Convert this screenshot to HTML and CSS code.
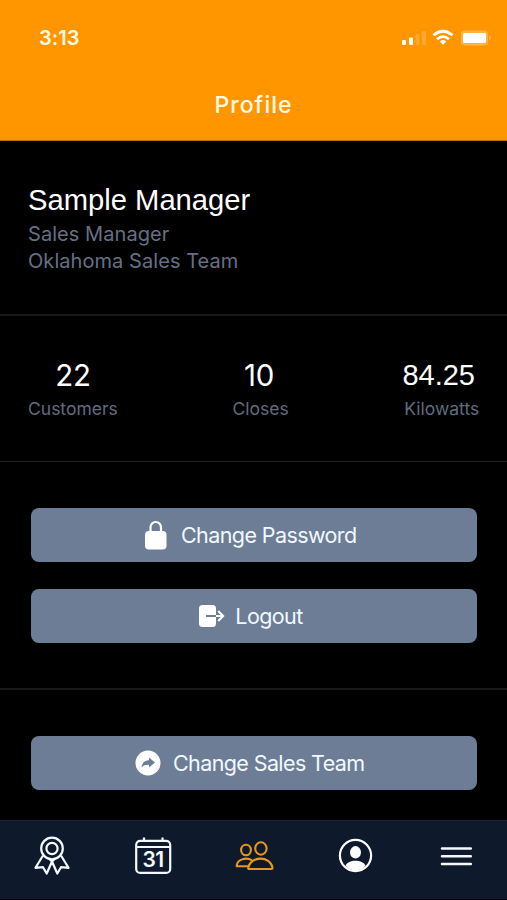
FILE: index.html
```html
<!DOCTYPE html>
<html lang="en">
<head>
<meta charset="utf-8">
<title>Profile</title>
<link rel="stylesheet" href="styles.css">
</head>
<body>
<div class="app">
  <header class="header">
    <div class="status">
      <span class="time">3:13</span>
      <svg class="status-icons" width="92" height="20" viewBox="0 0 92 20" fill="#fff">
        <rect x="1" y="12" width="4" height="5" rx="1.3"/>
        <rect x="8" y="9.500" width="4" height="7.500" rx="1.300"/>
        <rect x="14.500" y="6" width="4" height="11" rx="1" opacity=".18"/>
        <rect x="21" y="3" width="4" height="14" rx="1" opacity=".18"/>
        <g fill="none" stroke="#fff" stroke-width="2.800">
          <path d="M32.500 7.300Q42 -.8 51.500 7.300"/>
          <path d="M36 11.200Q42 6 48 11.200"/>
        </g>
        <path d="M38.700 13.400Q42 10.700 45.300 13.400L42 16.700z"/>
        <rect x="60" y="2.500" width="27" height="15" rx="4" opacity=".28"/>
        <rect x="62" y="5" width="23" height="10" rx="1.500"/>
        <path d="M88.300 7.300Q91.500 10 88.300 12.700z" opacity=".45"/>
      </svg>
    </div>
    <h1 class="title">Profile</h1>
  </header>
  <main>
    <section class="person">
      <h2 class="name">Sample Manager</h2>
      <p class="role">Sales Manager</p>
      <p class="team">Oklahoma Sales Team</p>
    </section>
    <section class="stats">
      <div class="stat"><strong class="value">22</strong><span class="label">Customers</span></div>
      <div class="stat closes"><strong class="value">10</strong><span class="label">Closes</span></div>
      <div class="stat kilowatts"><strong class="value">84.25</strong><span class="label">Kilowatts</span></div>
    </section>
    <section class="actions account">
      <button class="button password">
        <svg width="22" height="30" viewBox="0 0 22 30"><rect y="11" width="21.500" height="18.500" rx="3.800" fill="#fff"/><path d="M5.500 12V7.500a5.250 5.500 0 0 1 10.500 0V12" fill="none" stroke="#fff" stroke-width="2.200"/></svg>
        <span>Change Password</span>
      </button>
      <button class="button logout">
        <svg width="26" height="22" viewBox="0 0 26 22"><rect width="17" height="22" rx="3.500" fill="#fff"/><path d="M7 11h10" stroke="#6c7d95" stroke-width="2"/><path d="M17 11h7M19.200 6l5 5-5 5" fill="none" stroke="#fff" stroke-width="2"/></svg>
        <span>Logout</span>
      </button>
    </section>
    <section class="actions switch">
      <button class="button sales">
        <svg width="26" height="26" viewBox="0 0 26 26"><circle cx="13" cy="13" r="12.500" fill="#fff"/><path d="M6.500 17.500C7.200 12.200 10 10.200 14 10.200V7.500L20 12.600 14 17.500V14.800C10.500 14.600 8.500 15.200 6.500 17.500z" fill="#6c7d95"/></svg>
        <span>Change Sales Team</span>
      </button>
    </section>
  </main>
  <nav class="tabs">
    <svg width="40" height="42" viewBox="0 0 40 42" fill="none" stroke="#f3f9ff" stroke-width="2.200" stroke-linejoin="round"><circle cx="20" cy="12.500" r="10.800"/><circle cx="20" cy="12.500" r="5.600"/><path d="M11 19.500 3.500 31.800l7.500-.6 3.700 6.300L20 25.500l5.300 12 3.700-6.300 7.500.6L29 19.500M17.500 23 20 25.500l2.500-2.500"/></svg>
    <svg width="40" height="42" viewBox="0 0 40 42" fill="none" stroke="#f3f9ff" stroke-width="2.200"><rect x="3.200" y="4.900" width="34" height="32" rx="4"/><path d="M3.200 11h34M11 1.500v4M29.500 1.500v4"/><text x="20" y="31" class="date">31</text></svg>
    <svg width="40" height="42" viewBox="0 0 40 42" fill="none" stroke="#e9971b" stroke-width="2.100" stroke-linejoin="round"><ellipse cx="12" cy="14" rx="4.900" ry="5.300"/><ellipse cx="26.900" cy="12.500" rx="5.700" ry="6.200"/><path d="M17.800 24.200C12 20.700 2.700 23.500 2.700 30.300H14M15.200 33c-.8 0-1.300-.7-1-1.500 2.600-11.800 22-11.800 24.300 0 .2.800-.2 1.500-1 1.500z"/></svg>
    <svg width="40" height="42" viewBox="0 0 40 42"><circle cx="20.500" cy="19.500" r="15.600" fill="none" stroke="#fff" stroke-width="2.200"/><ellipse cx="20.500" cy="16.300" rx="5.500" ry="6.200" fill="#fff"/><path d="M10.500 29.500C13 23 28 23 30.500 29.500 26.500 36 14.500 36 10.500 29.500z" fill="#fff"/></svg>
    <svg width="40" height="42" viewBox="0 0 40 42" stroke="#f3f9ff" stroke-width="2.500" stroke-linecap="round"><path d="M5 12.500h28.800M5 20.300h28.800M5 28h28.800"/></svg>
  </nav>
</div>
</body>
</html>
```
FILE: styles.css
```css
* { box-sizing: border-box; }
body, h1, h2, p { margin: 0; font-weight: 400; }
body { background: #000; font-family: Inter, sans-serif; color: #fff; }
.app { height: 900px; display: flex; flex-direction: column; overflow: hidden; }
.header { height: 141px; padding-top: 28px; background: #ff9600; flex: none; border-bottom: 1px solid #b96d00; }
.status { display: flex; justify-content: space-between; align-items: center; height: 20px; padding: 0 14px 0 39px; }
.time { font-size: 20px; font-weight: 600; letter-spacing: .1px; color: #fffbe9; }
.title { margin-top: 43px; font-size: 23px; line-height: 28px; font-weight: 500; letter-spacing: 1px; text-align: center; color: #fffbe9; }
main { flex: 1; }
.person { height: 175px; padding: 41px 28px 0; border-bottom: 2px solid #181818; }
.name { font: 29.200px/36px "Liberation Sans", sans-serif; white-space: nowrap; }
.role, .team { font-size: 20px; line-height: 27px; letter-spacing: .06px; color: #667085; }
.role { margin-top: 3px; }
.stats { height: 146px; padding: 41px 26px 0 28px; display: flex; justify-content: space-between; border-bottom: 1px solid #222; }
.stat { display: flex; flex-direction: column; align-items: center; }
.value { font-size: 29.500px; line-height: 36px; font-weight: 400; letter-spacing: -.3px; }
.label { margin-top: 5px; font-size: 17.500px; line-height: 22px; letter-spacing: 0; color: #626b80; }
.kilowatts .value { font-family: "Liberation Sans", sans-serif; font-size: 29px; letter-spacing: 0; margin-right: 6px; }
.closes { padding-left: 1px; }
.closes .value { margin-right: 3px; }
.actions { padding: 46px 30px 0 30.500px; display: flex; flex-direction: column; gap: 27px; }
.account { height: 228px; border-bottom: 2px solid #181818; }
.button { display: flex; align-items: center; justify-content: center; gap: 14px; width: 446.500px; height: 54px; padding: 0 6px 0 0; border: 0; border-radius: 8px; background: #6c7d95; color: #f2f8ff; font: 21.500px/28px Inter, sans-serif; letter-spacing: -.6px; }
.logout { gap: 10.500px; }
.sales { gap: 12px; padding-right: 8px; }
.tabs { height: 79px; flex: none; margin-bottom: 1px; padding: 15px 30.500px 0 32px; display: flex; justify-content: space-between; background: #0e1a2c; border-top: 1px solid #1b2534; }
.date { font: 600 21px Inter, sans-serif; letter-spacing: -.5px; fill: #f3f9ff; stroke: none; text-anchor: middle; }
```
